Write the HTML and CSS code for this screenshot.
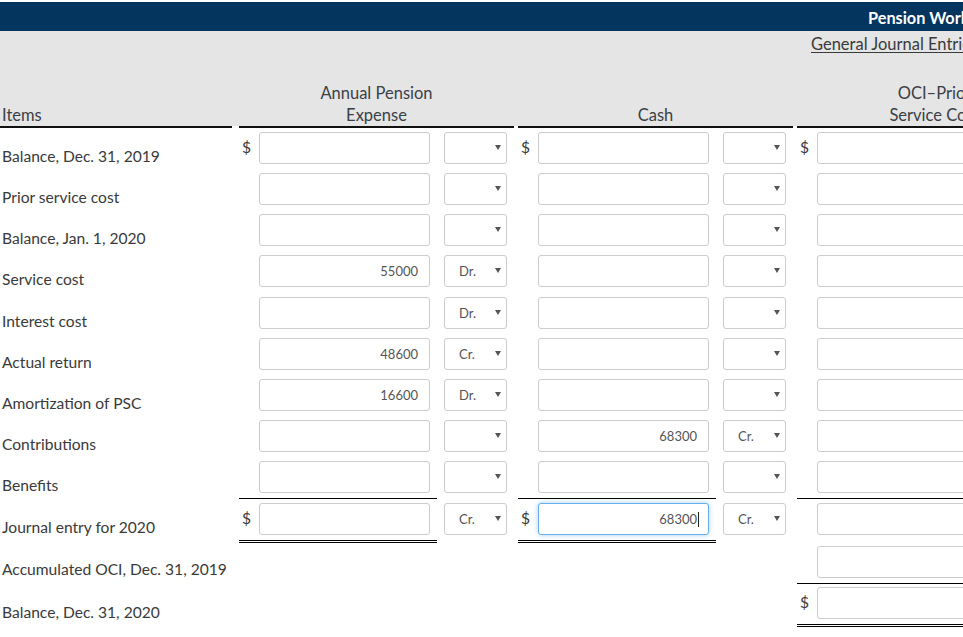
FILE: index.html
```html
<!DOCTYPE html>
<html lang="en">
<head>
<meta charset="utf-8">
<title>Pension Worksheet</title>
<link rel="stylesheet" href="styles.css">
</head>
<body>
<div class="sheet">
  <div class="titlebar"><span class="title">Pension Worksheet</span></div>
  <div class="head">
    <div class="super"><span class="super-text">General Journal Entries</span></div>
    <div class="hgrid">
      <div class="hcell items">Items</div>
      <div class="hcell">Annual Pension<br>Expense</div>
      <div class="hcell">Cash</div>
      <div class="hcell">OCI–Prior<br>Service Cost</div>
    </div>
  </div>

  <div class="rows">
    <!-- Balance, Dec. 31, 2019 -->
    <div class="lbl">Balance, Dec. 31, 2019</div>
    <div class="grp"><div class="money"><span class="cur">$</span><input class="inp" type="text"></div><span class="sel"><select><option></option><option>Dr.</option><option>Cr.</option></select></span></div>
    <div class="grp"><div class="money"><span class="cur">$</span><input class="inp" type="text"></div><span class="sel"><select><option></option><option>Dr.</option><option>Cr.</option></select></span></div>
    <div class="grp"><div class="money"><span class="cur">$</span><input class="inp" type="text"></div></div>

    <!-- Prior service cost -->
    <div class="lbl">Prior service cost</div>
    <div class="grp"><div class="money"><span class="cur"></span><input class="inp" type="text"></div><span class="sel"><select><option></option><option>Dr.</option><option>Cr.</option></select></span></div>
    <div class="grp"><div class="money"><span class="cur"></span><input class="inp" type="text"></div><span class="sel"><select><option></option><option>Dr.</option><option>Cr.</option></select></span></div>
    <div class="grp"><div class="money"><span class="cur"></span><input class="inp" type="text"></div></div>

    <!-- Balance, Jan. 1, 2020 -->
    <div class="lbl">Balance, Jan. 1, 2020</div>
    <div class="grp"><div class="money"><span class="cur"></span><input class="inp" type="text"></div><span class="sel"><select><option></option><option>Dr.</option><option>Cr.</option></select></span></div>
    <div class="grp"><div class="money"><span class="cur"></span><input class="inp" type="text"></div><span class="sel"><select><option></option><option>Dr.</option><option>Cr.</option></select></span></div>
    <div class="grp"><div class="money"><span class="cur"></span><input class="inp" type="text"></div></div>

    <!-- Service cost -->
    <div class="lbl">Service cost</div>
    <div class="grp"><div class="money"><span class="cur"></span><input class="inp" type="text" value="55000"></div><span class="sel"><select><option></option><option selected>Dr.</option><option>Cr.</option></select></span></div>
    <div class="grp"><div class="money"><span class="cur"></span><input class="inp" type="text"></div><span class="sel"><select><option></option><option>Dr.</option><option>Cr.</option></select></span></div>
    <div class="grp"><div class="money"><span class="cur"></span><input class="inp" type="text"></div></div>

    <!-- Interest cost -->
    <div class="lbl">Interest cost</div>
    <div class="grp"><div class="money"><span class="cur"></span><input class="inp" type="text"></div><span class="sel"><select><option></option><option selected>Dr.</option><option>Cr.</option></select></span></div>
    <div class="grp"><div class="money"><span class="cur"></span><input class="inp" type="text"></div><span class="sel"><select><option></option><option>Dr.</option><option>Cr.</option></select></span></div>
    <div class="grp"><div class="money"><span class="cur"></span><input class="inp" type="text"></div></div>

    <!-- Actual return -->
    <div class="lbl">Actual return</div>
    <div class="grp"><div class="money"><span class="cur"></span><input class="inp" type="text" value="48600"></div><span class="sel"><select><option></option><option>Dr.</option><option selected>Cr.</option></select></span></div>
    <div class="grp"><div class="money"><span class="cur"></span><input class="inp" type="text"></div><span class="sel"><select><option></option><option>Dr.</option><option>Cr.</option></select></span></div>
    <div class="grp"><div class="money"><span class="cur"></span><input class="inp" type="text"></div></div>

    <!-- Amortization of PSC -->
    <div class="lbl">Amortization of PSC</div>
    <div class="grp"><div class="money"><span class="cur"></span><input class="inp" type="text" value="16600"></div><span class="sel"><select><option></option><option selected>Dr.</option><option>Cr.</option></select></span></div>
    <div class="grp"><div class="money"><span class="cur"></span><input class="inp" type="text"></div><span class="sel"><select><option></option><option>Dr.</option><option>Cr.</option></select></span></div>
    <div class="grp"><div class="money"><span class="cur"></span><input class="inp" type="text"></div></div>

    <!-- Contributions -->
    <div class="lbl">Contributions</div>
    <div class="grp"><div class="money"><span class="cur"></span><input class="inp" type="text"></div><span class="sel"><select><option></option><option>Dr.</option><option>Cr.</option></select></span></div>
    <div class="grp"><div class="money"><span class="cur"></span><input class="inp" type="text" value="68300"></div><span class="sel"><select><option></option><option>Dr.</option><option selected>Cr.</option></select></span></div>
    <div class="grp"><div class="money"><span class="cur"></span><input class="inp" type="text"></div></div>

    <!-- Benefits -->
    <div class="lbl">Benefits</div>
    <div class="grp"><div class="money sub"><span class="cur"></span><input class="inp" type="text"></div><span class="sel"><select><option></option><option>Dr.</option><option>Cr.</option></select></span></div>
    <div class="grp"><div class="money sub"><span class="cur"></span><input class="inp" type="text"></div><span class="sel"><select><option></option><option>Dr.</option><option>Cr.</option></select></span></div>
    <div class="grp"><div class="money sub"><span class="cur"></span><input class="inp" type="text"></div></div>

    <!-- Journal entry for 2020 -->
    <div class="lbl">Journal entry for 2020</div>
    <div class="grp"><div class="money total"><span class="cur">$</span><input class="inp" type="text"></div><span class="sel"><select><option></option><option>Dr.</option><option selected>Cr.</option></select></span></div>
    <div class="grp"><div class="money total"><span class="cur">$</span><span class="caret-wrap"><input class="inp focus" type="text" value="68300"></span></div><span class="sel"><select><option></option><option>Dr.</option><option selected>Cr.</option></select></span></div>
    <div class="grp"><div class="money"><span class="cur"></span><input class="inp" type="text"></div></div>

    <!-- Accumulated OCI, Dec. 31, 2019 -->
    <div class="lbl lbl-up">Accumulated OCI, Dec. 31, 2019</div>
    <div class="grp"></div>
    <div class="grp"></div>
    <div class="grp"><div class="money tight sub"><span class="cur"></span><input class="inp" type="text"></div></div>

    <!-- Balance, Dec. 31, 2020 -->
    <div class="lbl">Balance, Dec. 31, 2020</div>
    <div class="grp"></div>
    <div class="grp"></div>
    <div class="grp"><div class="money tight total"><span class="cur">$</span><input class="inp" type="text"></div></div>
  </div>
</div>
</body>
</html>
```

FILE: styles.css
```css
html, body {
  margin: 0;
  padding: 0;
  background: #fff;
}

body {
  font-family: Lato, "Open Sans", "Liberation Sans", sans-serif;
  color: #333;
  overflow: hidden;
}

.sheet {
  width: 1400px;
  padding-top: 2px;
}

.titlebar {
  background: #03355f;
  height: 29px;
  box-sizing: border-box;
  padding-top: 3px;
  padding-left: 868px;
  line-height: 26px;
  font-size: 16.3px;
  font-weight: 700;
  color: #fff;
  white-space: nowrap;
}

.head {
  height: 97px;
  display: flex;
  flex-direction: column;
  justify-content: space-between;
  background: linear-gradient(#e5e5e5, #e5e5e5) top left / 100% 95px no-repeat;
}

.super {
  line-height: 22px;
  padding-top: 2px;
  font-size: 16.5px;
  padding-left: 811px;
  white-space: nowrap;
  color: #3a3a3a;
}

.super-text {
  text-decoration: underline;
  text-underline-offset: 2px;
}

.hgrid,
.rows {
  display: grid;
  grid-template-columns: 235px repeat(3, 275px);
  column-gap: 4px;
}

.hgrid {
  align-items: end;
}

.hcell {
  font-size: 16.5px;
  line-height: 22px;
  text-align: center;
  padding-bottom: 0;
  border-bottom: 2px solid #111;
  white-space: nowrap;
  color: #3a3f46;
}

.hcell.items {
  text-align: left;
  padding-left: 2px;
  margin-right: 3px;
}

.lbl {
  font-size: 15.6px;
  line-height: 22px;
  padding: 17px 0 0 2px;
  white-space: nowrap;
  color: #3a3a3a;
}

.lbl-up {
  padding-top: 15px;
}

.grp {
  display: flex;
  align-items: flex-start;
}

.money {
  display: flex;
  width: 198px;
  box-sizing: border-box;
  padding: 4px 7px 5.125px 0;
}

.money.tight {
  padding-top: 3px;
  padding-bottom: 5px;
}

.money.sub {
  border-bottom: 1px solid #000;
}

.money.total {
  border-bottom: 3px double #000;
}

.cur {
  width: 20px;
  flex: none;
  box-sizing: border-box;
  padding-left: 3px;
  font-size: 15.6px;
  line-height: 30px;
  color: #3a3a3a;
}

.inp {
  width: 171px;
  height: 32px;
  box-sizing: border-box;
  margin: 0;
  border: 1px solid #ccc;
  border-radius: 3px;
  background: #fff;
  padding: 0 11px;
  font-family: Lato, "Open Sans", sans-serif;
  font-size: 13px;
  color: #555;
  text-align: right;
  outline: none;
}

.inp.focus {
  border-color: #66afe9;
  box-shadow: 0 0 5px rgba(102, 175, 233, 0.6);
}

.caret-wrap {
  position: relative;
  display: block;
  width: 171px;
  height: 32px;
}

.caret-wrap::after {
  content: "";
  position: absolute;
  right: 10px;
  top: 9px;
  width: 1px;
  height: 15px;
  background: #222;
}

.sel {
  position: relative;
  display: block;
  flex: none;
  width: 63px;
  height: 32px;
  margin: 4px 0 0 7px;
}

.sel select {
  -webkit-appearance: none;
  appearance: none;
  width: 100%;
  height: 100%;
  box-sizing: border-box;
  margin: 0;
  border: 1px solid #ccc;
  border-radius: 3px;
  background: #fff;
  padding: 0 0 0 14px;
  font-family: Lato, "Open Sans", sans-serif;
  font-size: 13px;
  color: #555;
  outline: none;
}

.sel::after {
  content: "";
  position: absolute;
  right: 6px;
  top: 13px;
  width: 0;
  height: 0;
  border-left: 3px solid transparent;
  border-right: 3px solid transparent;
  border-top: 5px solid #555;
  pointer-events: none;
}
```
